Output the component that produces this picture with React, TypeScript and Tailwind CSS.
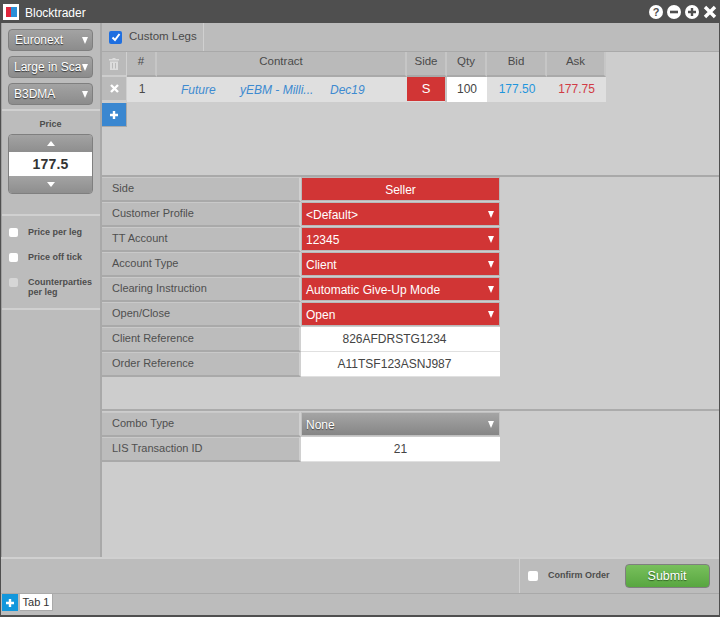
import React from "react";

const Caret = ({ className = "", w = 8 }: { className?: string; w?: number }) => (
  <svg width={w} height="7" viewBox="0 0 8 7" preserveAspectRatio="none" className={className}><path d="M0 0H8L4 7Z" fill="currentColor" /></svg>
);

const Up = () => (
  <svg width="8" height="5" viewBox="0 0 8 5"><path d="M0 5H8L4 0Z" fill="#fff" /></svg>
);
const Down = () => (
  <svg width="8" height="5" viewBox="0 0 8 5"><path d="M0 0H8L4 5Z" fill="#fff" /></svg>
);

const Plus = ({ s = 10 }: { s?: number }) => (
  <svg width={s} height={s} viewBox="0 0 10 10"><path d="M5 1V9M1 5H9" stroke="#fff" strokeWidth="2.4" /></svg>
);

const SideSelect = ({ label, tight }: { label: string; tight?: boolean }) => (
  <div className={`h-[22px] w-[85px] flex items-center justify-between pr-[4px] rounded-[4px] border border-[#7f7f7f] bg-gradient-to-b from-[#a3a3a3] to-[#8c8c8c] text-white text-[12px] whitespace-nowrap [text-shadow:0_1px_1px_#333] ${tight ? "pl-[5px]" : "pl-[6px]"}`}>
    <span>{label}</span>
    <Caret w={6} className="shrink-0 text-white" />
  </div>
);

const Check = ({ label, two, dim }: { label: React.ReactNode; two?: boolean; dim?: boolean }) => (
  <div className={`flex items-start pl-[7px] ${two ? "h-[27px]" : "h-[25px]"}`}>
    <div className={`mt-[1px] w-[9px] h-[9px] rounded-[2px] shrink-0 ${dim ? "bg-[#d6d6d6]" : "bg-white"}`} />
    <div className="ml-[10px] text-[9px] leading-[10px] font-bold text-[#4d4d4d]">{label}</div>
  </div>
);

const HeadCell = ({ w, label }: { w: string; label: string }) => (
  <div className={`${w} h-[25px] shrink-0 bg-[#bababa] border-r-2 border-b-2 border-[#c6c6c6] border-b-[#a9a9a9] flex items-center justify-center pb-[3px] text-[11.5px] text-[#4a4a4a]`}>{label}</div>
);

const Row = ({ label, children }: { label: string; children: React.ReactNode }) => (
  <div className="flex h-[25px]">
    <div className="w-[199px] shrink-0 bg-[#bcbcbc] border-b-2 border-[#a9a9a9] border-t border-t-[#c9c9c9] border-r-2 border-r-[#d0d0d0] pl-[10px] text-[11px] leading-[21px] text-[#4f4f4f]">{label}</div>
    {children}
  </div>
);

const Red = ({ label, center }: { label: string; center?: boolean }) => (
  <div className={`w-[199px] h-[24px] bg-[#d13535] border border-[#b9b9b9] pt-[1px] text-white text-[12px] flex items-center ${center ? "justify-center" : "justify-between pl-[4px] pr-[5px]"}`}>
    <span>{label}</span>
    {!center && <Caret w={6} className="text-white" />}
  </div>
);

const White = ({ label, off }: { label: string; off?: boolean }) => (
  <div className={`w-[199px] h-[25px] bg-white border-b border-[#e0e0e0] text-[12px] text-[#444] flex items-center justify-center ${off ? "pr-[12px]" : ""}`}>{label}</div>
);

export default function App() {
  return (
    <div className="w-[720px] h-[617px] bg-[#4f4f4f] flex flex-col overflow-hidden font-['Liberation_Sans',Arial,sans-serif]">
      <div className="h-[23px] shrink-0 flex items-center pl-[3px] pr-[3px]">
        <div className="w-[16px] h-[16px] mt-[1px] bg-white flex items-center justify-center">
          <div className="w-[5px] h-[10px] bg-[#e0263c]" />
          <div className="w-[6px] h-[10px] bg-[#2a8fd8]" />
        </div>
        <span className="ml-[6px] mt-[2px] text-white text-[12px]">Blocktrader</span>
        <div className="ml-auto flex items-center gap-[4px]">
          <svg width="14" height="14" viewBox="0 0 14 14"><circle cx="7" cy="7" r="7" fill="#fff" /><text x="7" y="11" fontSize="11" fontWeight="bold" textAnchor="middle" fill="#4f4f4f" fontFamily="Liberation Sans">?</text></svg>
          <svg width="14" height="14" viewBox="0 0 14 14"><circle cx="7" cy="7" r="7" fill="#fff" /><path d="M3 7H11" stroke="#4f4f4f" strokeWidth="2.6" /></svg>
          <svg width="14" height="14" viewBox="0 0 14 14"><circle cx="7" cy="7" r="7" fill="#fff" /><path d="M3 7H11M7 3V11" stroke="#4f4f4f" strokeWidth="2.4" /></svg>
          <svg width="14" height="14" viewBox="0 0 14 14"><path d="M2 2L12 12M12 2L2 12" stroke="#fff" strokeWidth="3.4" /></svg>
        </div>
      </div>

      <div className="flex-1 flex flex-col mx-[1px] mb-[2px] min-h-0 bg-[#bcbcbc]">
        <div className="flex-1 flex min-h-0">
          {/* sidebar */}
          <div className="w-[101px] shrink-0 bg-[#bcbcbc] border-l border-[#a0a0a0] border-r-2 border-r-[#a9a9a9] flex flex-col">
            <div className="h-[88px] pt-[6px] pl-[6px] flex flex-col gap-[5px] border-b-2 border-[#d0d0d0]">
              <SideSelect label="Euronext" />
              <SideSelect label="Large in Sca" tight />
              <SideSelect label="B3DMA" tight />
            </div>
            <div className="h-[105px] border-b-2 border-[#d0d0d0] pl-[6px] flex flex-col">
              <div className="w-[85px] text-center mt-[5px] h-[16px] leading-[16px] text-[9px] font-bold text-[#4d4d4d]">Price</div>
              <div className="w-[85px] h-[60px] mt-[2px] rounded-[4px] border border-[#7f7f7f] overflow-hidden flex flex-col">
                <div className="h-[17px] bg-gradient-to-b from-[#a3a3a3] to-[#8e8e8e] flex items-center justify-center"><Up /></div>
                <div className="h-[24px] bg-white flex items-center justify-center text-[14px] font-bold tracking-[0.2px] text-[#333]">177.5</div>
                <div className="flex-1 bg-gradient-to-b from-[#a3a3a3] to-[#8e8e8e] flex items-center justify-center"><Down /></div>
              </div>
            </div>
            <div className="h-[94px] border-b-2 border-[#d0d0d0] pt-[11px]">
              <Check label="Price per leg" />
              <Check label="Price off tick" />
              <Check label={<>Counterparties<br />per leg</>} two dim />
            </div>
          </div>

          {/* main */}
          <div className="flex-1 flex flex-col min-w-0 bg-[#cdcdcd]">
            <div className="h-[29px] shrink-0 flex bg-[#bcbcbc] border-b border-[#a9a9a9]">
              <div className="w-[102px] flex items-center pl-[7px] border-r border-[#d0d0d0]">
                <div className="w-[13px] h-[13px] rounded-[2px] bg-[#1f6fe0] flex items-center justify-center">
                  <svg width="10" height="10" viewBox="0 0 10 10"><path d="M1.5 5.5L4 8L8.5 2" stroke="#fff" strokeWidth="2" fill="none" /></svg>
                </div>
                <span className="ml-[7px] text-[11.5px] text-[#4a4a4a]">Custom Legs</span>
              </div>
            </div>
            <div className="h-[125px] shrink-0 border-b-2 border-[#a9a9a9] flex">
              <div className="w-[25px] shrink-0 flex flex-col">
                <div className="h-[25px] bg-[#bababa] border-r border-b-2 border-[#d0d0d0] border-b-[#cdcdcd] flex items-center justify-center">
                  <svg width="10" height="12" viewBox="0 0 10 12" fill="#dcdcdc"><path d="M3.5 0H6.5V1H10V2.5H0V1H3.5ZM1 3.5H9V12H1Z" /><path d="M3.5 5V10.5M6.5 5V10.5" stroke="#bababa" strokeWidth="1" /></svg>
                </div>
                <div className="h-[25px] bg-[#bababa] border-r border-b-2 border-[#d0d0d0] border-b-[#cdcdcd] flex items-center justify-center">
                  <svg width="9" height="9" viewBox="0 0 9 9"><path d="M1 1L8 8M8 1L1 8" stroke="#fff" strokeWidth="2.4" /></svg>
                </div>
                <div className="h-[24px] mt-[1px] bg-[#3a87d0] border-b border-[#a9a9a9] border-r flex items-center justify-center"><Plus /></div>
              </div>
              <div className="flex flex-col">
                <div className="flex">
                  <HeadCell w="w-[30px]" label="#" />
                  <HeadCell w="w-[250px]" label="Contract" />
                  <HeadCell w="w-[40px]" label="Side" />
                  <HeadCell w="w-[40px]" label="Qty" />
                  <HeadCell w="w-[60px]" label="Bid" />
                  <HeadCell w="w-[59px]" label="Ask" />
                </div>
                <div className="flex h-[25px] bg-[#dfdfdf] text-[12px] items-center">
                  <div className="w-[30px] text-center text-[#4a4a4a] pb-[2px]">1</div>
                  <div className="w-[250px] flex italic text-[#3d8ad0] font-normal">
                    <span className="ml-[24px] w-[59px]">Future</span>
                    <span className="w-[90px]">yEBM - Milli...</span>
                    <span>Dec19</span>
                  </div>
                  <div className="w-[40px] h-[25px] border-r-2 border-[#c6c6c6] shrink-0"><div className="w-[38px] h-[24px] bg-[#d13535] text-white text-[13px] flex items-center justify-center">S</div></div>
                  <div className="w-[40px] h-[25px] bg-white text-[#444] flex items-center justify-center pb-[2px]">100</div>
                  <div className="w-[60px] text-center text-[#1f95dc] pb-[2px]">177.50</div>
                  <div className="w-[59px] text-center text-[#d13b45] pb-[2px]">177.75</div>
                </div>
              </div>
            </div>

            <div className="h-[234px] shrink-0 border-b-2 border-[#ababab] flex flex-col">
              <Row label="Side"><Red label="Seller" center /></Row>
              <Row label="Customer Profile"><Red label="<Default>" /></Row>
              <Row label="TT Account"><Red label="12345" /></Row>
              <Row label="Account Type"><Red label="Client" /></Row>
              <Row label="Clearing Instruction"><Red label="Automatic Give-Up Mode" /></Row>
              <Row label="Open/Close"><Red label="Open" /></Row>
              <Row label="Client Reference"><White label="826AFDRSTG1234" off /></Row>
              <Row label="Order Reference"><White label="A11TSF123ASNJ987" off /></Row>
            </div>

            <div className="flex-1 pt-[1px]">
              <Row label="Combo Type">
                <div className="w-[199px] h-[24px] border border-[#c0c0c0] pt-[1px] bg-gradient-to-b from-[#a5a5a5] to-[#868686] text-white text-[12px] flex items-center justify-between pl-[4px] pr-[5px] [text-shadow:0_1px_1px_#444]">
                  <span>None</span><Caret w={6} className="text-white" />
                </div>
              </Row>
              <Row label="LIS Transaction ID"><White label="21" /></Row>
            </div>
          </div>
        </div>

        {/* footer */}
        <div className="h-[37px] shrink-0 border-t-2 border-[#d0d0d0] border-b border-b-[#a9a9a9] bg-[#bcbcbc] flex">
          <div className="ml-auto w-[200px] border-l border-[#d0d0d0] flex items-center pl-[8px]">
            <div className="w-[10px] h-[10px] rounded-[2px] bg-white" />
            <span className="ml-[10px] text-[9px] font-bold text-[#4d4d4d] whitespace-nowrap">Confirm Order</span>
            <div className="ml-[15px] w-[85px] h-[24px] rounded-[4px] border border-[#7f7f7f] bg-gradient-to-b from-[#78c05c] to-[#58a640] text-white text-[12.5px] flex items-center justify-center [text-shadow:0_1px_1px_#2c5a20]">Submit</div>
          </div>
        </div>
        <div className="h-[21px] shrink-0 flex bg-[#bcbcbc] pl-[1px]">
          <div className="w-[16px] h-[17px] bg-[#1297dc] flex items-center justify-center"><Plus /></div>
          <div className="ml-[2px] w-[33px] h-[17px] bg-white border-r border-b border-[#a9a9a9] text-[11px] text-[#333] flex items-center justify-center">Tab 1</div>
        </div>
      </div>
    </div>
  );
}
